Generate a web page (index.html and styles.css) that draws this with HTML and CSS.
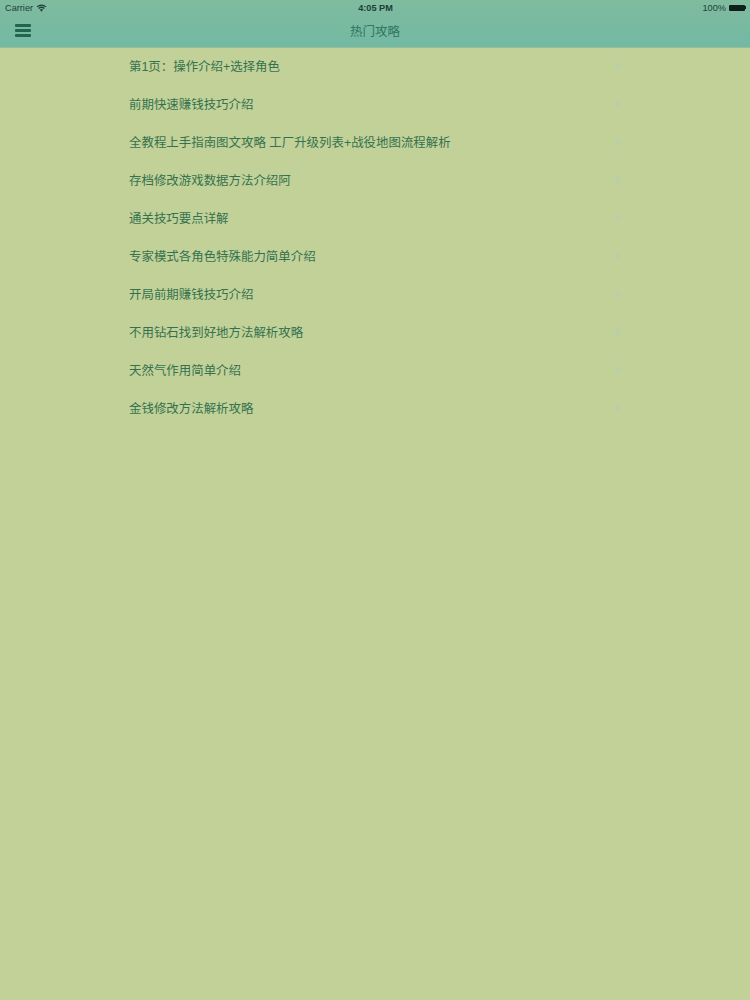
FILE: index.html
```html
<!DOCTYPE html>
<html lang="zh-CN">
<head>
    <meta charset="UTF-8">
    <meta name="viewport" content="width=device-width, initial-scale=1.0">
    <title>热门攻略</title>
    <link rel="stylesheet" href="styles.css">
</head>
<body>
    <header class="topbar">
        <div class="status">
            <div class="status-left">
                <span>Carrier</span>
                <svg class="wifi" viewBox="0 0 12 9" width="11" height="8">
                    <path d="M6 8.6 L4.2 6.4 A2.9 2.9 0 0 1 7.8 6.4 Z" fill="#1d4038"/>
                    <path d="M1 3.2 A7.4 7.4 0 0 1 11 3.2" fill="none" stroke="#1d4038" stroke-width="1.4"/>
                    <path d="M2.8 5.1 A4.8 4.8 0 0 1 9.2 5.1" fill="none" stroke="#1d4038" stroke-width="1.4"/>
                </svg>
            </div>
            <div class="status-time">4:05 PM</div>
            <div class="status-right">
                <span>100%</span>
                <span class="battery"></span>
                <span class="battery-tip"></span>
            </div>
        </div>
        <div class="navbar">
            <div class="menu-icon"><i></i><i></i><i></i></div>
            <div class="nav-title">热门攻略</div>
        </div>
    </header>

    <ul class="list">
        <li><span>第1页：操作介绍+选择角色</span><b class="arrow"></b></li>
        <li><span>前期快速赚钱技巧介绍</span><b class="arrow"></b></li>
        <li><span>全教程上手指南图文攻略 工厂升级列表+战役地图流程解析</span><b class="arrow"></b></li>
        <li><span>存档修改游戏数据方法介绍阿</span><b class="arrow"></b></li>
        <li><span>通关技巧要点详解</span><b class="arrow"></b></li>
        <li><span>专家模式各角色特殊能力简单介绍</span><b class="arrow"></b></li>
        <li><span>开局前期赚钱技巧介绍</span><b class="arrow"></b></li>
        <li><span>不用钻石找到好地方法解析攻略</span><b class="arrow"></b></li>
        <li><span>天然气作用简单介绍</span><b class="arrow"></b></li>
        <li><span>金钱修改方法解析攻略</span><b class="arrow"></b></li>
    </ul>
</body>
</html>
```

FILE: styles.css
```css
* {
    box-sizing: border-box;
}
html, body {
    margin: 0;
    height: 100%;
}
body {
    font-family: "Liberation Sans", "Noto Sans CJK SC", sans-serif;
    background-color: #c1d198;
    overflow: hidden;
}
.topbar {
    height: 48px;
    background: linear-gradient(#7fbb9f, #73b9a3);
    border-bottom: 1px solid #93bf98;
}
.status {
    height: 15px;
    padding: 0 4px 0 5px;
    display: grid;
    grid-template-columns: 1fr auto 1fr;
    align-items: center;
    font-size: 9.2px;
    color: #1d4038;
}
.status-left {
    display: flex;
    align-items: center;
    gap: 3px;
}
.status-time {
    font-weight: bold;
}
.status-right {
    display: flex;
    justify-content: flex-end;
    align-items: center;
}
.battery {
    width: 16px;
    height: 6px;
    margin-left: 3px;
    background-color: #0f1f1a;
    border-radius: 1px;
}
.battery-tip {
    width: 1px;
    height: 3px;
    background-color: #0f1f1a;
}
.navbar {
    height: 31px;
    padding: 0 15px;
    display: grid;
    grid-template-columns: 1fr auto 1fr;
    align-items: center;
}
.menu-icon {
    display: flex;
    flex-direction: column;
    gap: 2px;
    width: 16px;
}
.menu-icon i {
    height: 3px;
    background-color: #22644f;
    border-radius: 1px;
}
.nav-title {
    font-size: 12.5px;
    color: #2f7560;
}
.list {
    list-style: none;
    margin: -1px 0 0;
    padding: 0 129px 0 129px;
}
.list li {
    height: 38px;
    display: flex;
    justify-content: space-between;
    align-items: center;
    font-size: 12.45px;
    color: #35714f;
}
.arrow {
    width: 0;
    height: 0;
    border-left: 5px solid #b9cfa9;
    border-top: 5px solid transparent;
    border-bottom: 5px solid transparent;
}
```
